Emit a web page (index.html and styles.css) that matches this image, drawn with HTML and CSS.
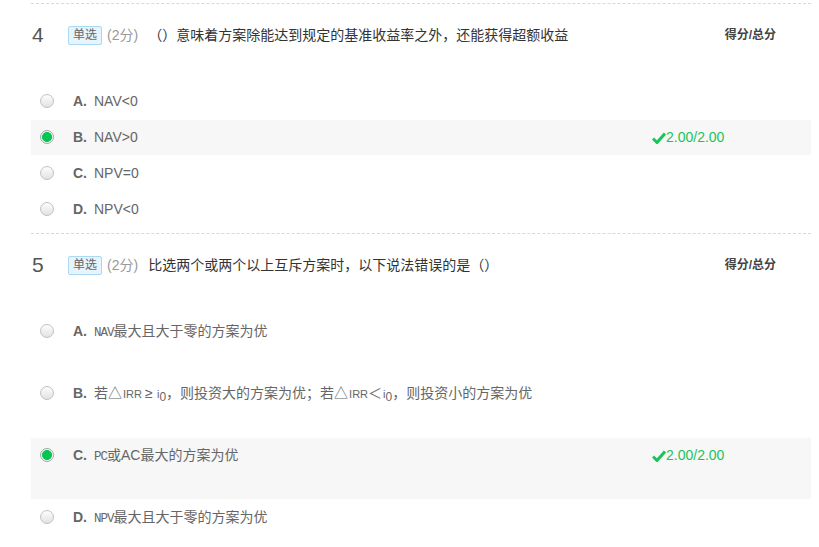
FILE: index.html
```html
<!DOCTYPE html>
<html lang="zh">
<head>
<meta charset="utf-8">
<title>测验</title>
<link rel="stylesheet" href="styles.css">
</head>
<body>
<div class="paper">
  <div class="question">
    <div class="q-head">
      <span class="q-num">4</span>
      <span class="q-type">单选</span>
      <span class="q-score">(2分)</span>
      <span class="q-title">（）意味着方案除能达到规定的基准收益率之外，还能获得超额收益</span>
      <span class="q-total">得分/总分</span>
    </div>
    <ul class="options">
      <li class="opt"><span class="radio"></span><span class="opt-label"><b>A.</b>NAV&lt;0</span></li>
      <li class="opt opt-on"><span class="radio radio-on"></span><span class="opt-label"><b>B.</b>NAV&gt;0</span><span class="mark"><svg class="tick" viewBox="0 0 14 12" width="14" height="12"><path d="M1 6.5 L5 10.5 L13 1.5" fill="none" stroke="#1bc45a" stroke-width="3"/></svg>2.00/2.00</span></li>
      <li class="opt"><span class="radio"></span><span class="opt-label"><b>C.</b>NPV=0</span></li>
      <li class="opt"><span class="radio"></span><span class="opt-label"><b>D.</b>NPV&lt;0</span></li>
    </ul>
  </div>
  <div class="question">
    <div class="q-head">
      <span class="q-num">5</span>
      <span class="q-type">单选</span>
      <span class="q-score">(2分)</span>
      <span class="q-title">比选两个或两个以上互斥方案时，以下说法错误的是（）</span>
      <span class="q-total">得分/总分</span>
    </div>
    <ul class="options options-tall">
      <li class="opt"><span class="radio"></span><span class="opt-label"><b>A.</b><span class="mono">NAV</span>最大且大于零的方案为优</span></li>
      <li class="opt"><span class="radio"></span><span class="opt-label"><b>B.</b>若△<span class="small">IRR</span><span class="sym">≥</span><span class="sub-i">i<sub>0</sub></span>，则投资大的方案为优；若△<span class="small">IRR</span><span class="sym">＜</span><span class="sub-i">i<sub>0</sub></span>，则投资小的方案为优</span></li>
      <li class="opt opt-on"><span class="radio radio-on"></span><span class="opt-label"><b>C.</b><span class="mono">PC</span>或AC最大的方案为优</span><span class="mark"><svg class="tick" viewBox="0 0 14 12" width="14" height="12"><path d="M1 6.5 L5 10.5 L13 1.5" fill="none" stroke="#1bc45a" stroke-width="3"/></svg>2.00/2.00</span></li>
      <li class="opt"><span class="radio"></span><span class="opt-label"><b>D.</b><span class="mono">NPV</span>最大且大于零的方案为优</span></li>
    </ul>
  </div>
</div>
</body>
</html>
```

FILE: styles.css
```css
html, body {
  margin: 0;
  padding: 0;
  background: #fff;
}
body {
  font-family: "Liberation Sans", "Noto Sans CJK SC", sans-serif;
  color: #333;
  font-size: 14px;
}
.paper {
  margin-left: 31px;
  width: 780px;
  padding-top: 3px;
}
.question {
  border-top: 1px dashed #d9d9d9;
  padding-bottom: 5px;
}
.q-head {
  display: flex;
  align-items: center;
  padding-top: 19px;
  height: 24px;
  line-height: 24px;
}
.q-num {
  width: 37px;
  font-size: 21px;
  color: #555;
  padding-left: 1px;
  box-sizing: border-box;
}
.q-type {
  display: inline-block;
  height: 17px;
  line-height: 17px;
  padding: 0 4px;
  border: 1px solid #a9d9f3;
  background: #e6f5fd;
  border-radius: 2px;
  font-size: 12px;
  color: #666;
}
.q-score {
  margin-left: 5px;
  color: #999;
  font-size: 14px;
}
.q-title {
  margin-left: 10px;
  color: #333;
  flex: 1;
}
.q-total {
  font-size: 12px;
  font-weight: bold;
  color: #444;
  padding-right: 35px;
}
.options {
  list-style: none;
  margin: 37px 0 0 0;
  padding: 0;
}
.opt {
  display: flex;
  align-items: flex-start;
  line-height: 35px;
  height: 35px;
  margin-bottom: 1px;
  color: #666;
}
.options-tall .opt {
  height: 61px;
}
.opt-on {
  background: #f7f7f7;
}
.radio {
  flex: none;
  width: 14px;
  height: 14px;
  margin: 10px 0 0 9px;
  box-sizing: border-box;
  border: 1px solid #c2c2c2;
  border-radius: 50%;
  background: linear-gradient(#fdfdfd, #e2e2e2);
}
.radio-on {
  border-color: #a8a8a8;
  background: radial-gradient(circle, #05c654 0, #05c654 4.6px, #eaf5ee 5.3px, #f4f4f4 6.5px);
}
.opt-label {
  margin-left: 19px;
  flex: 1;
}
.opt-label b {
  color: #666;
  margin-right: 7px;
}
.mono {
  font-family: "Liberation Mono", monospace;
  font-size: 12.5px;
  letter-spacing: -1px;
}
.small {
  font-size: 11px;
  margin-left: 1px;
}
.sym {
  display: inline-block;
  width: 14px;
  text-align: center;
}
.sub-i {
  font-family: "Liberation Sans", sans-serif;
  font-size: 11px;
  margin-left: 1px;
}
.sub-i sub {
  font-size: 12px;
  vertical-align: -3px;
  line-height: 0;
}
.mark {
  width: 159px;
  display: flex;
  align-items: center;
  height: 35px;
  color: #1bc45a;
  font-size: 14px;
}
```
